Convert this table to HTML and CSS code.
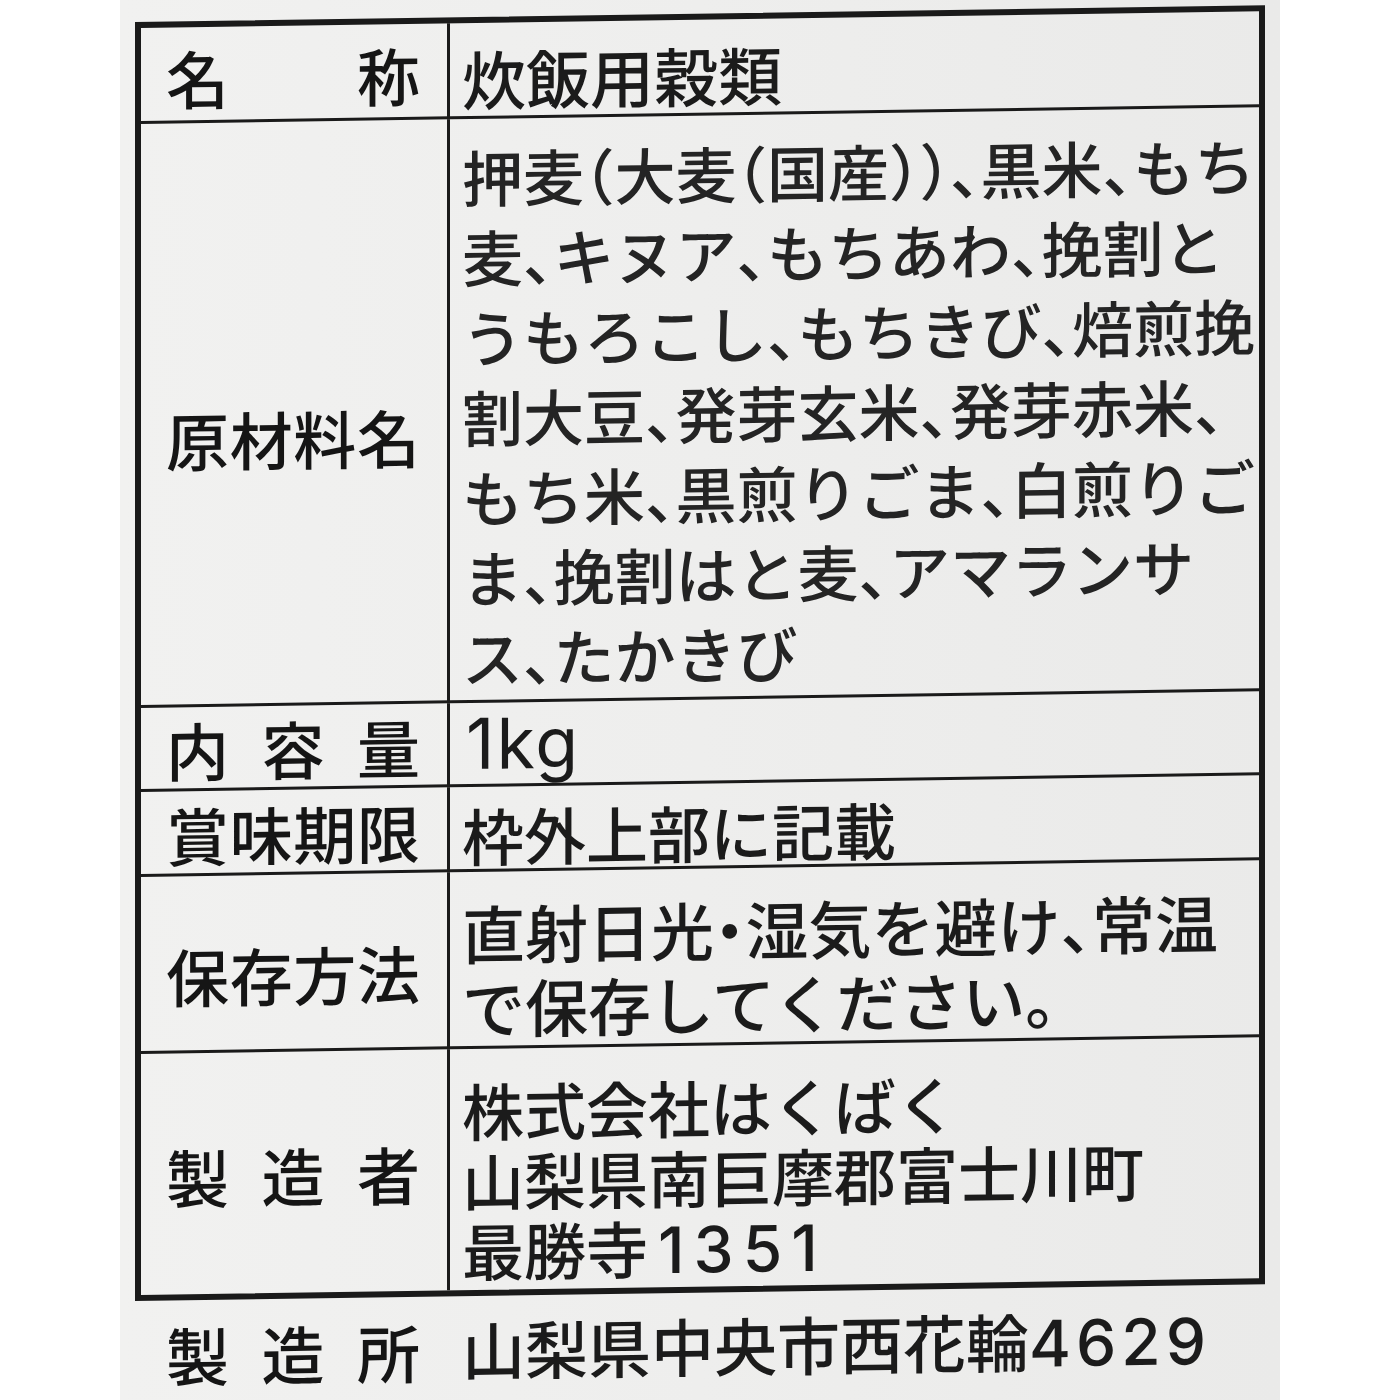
FILE: index.html
```html
<!DOCTYPE html>
<html lang="ja">
<head>
<meta charset="utf-8">
<title>炊飯用穀類 表示</title>
<link rel="stylesheet" href="styles.css">
</head>
<body>
<div class="photo">
  <div class="sheet">
    <div class="label-table">
      <div class="k k-name"><span>名称</span></div>
      <div class="v v-name">炊飯用穀類</div>

      <div class="k k-raw"><span>原材料名</span></div>
      <div class="v v-raw"><div class="lines">押麦<span class="p">（</span>大麦<span class="p">（</span>国産<span class="p">））、</span>黒米<span class="p">、</span>もち<br>麦<span class="p">、</span>キヌア<span class="p">、</span>もちあわ<span class="p">、</span>挽割と<br>うもろこし<span class="p">、</span>もちきび<span class="p">、</span>焙煎挽<br>割大豆<span class="p">、</span>発芽玄米<span class="p">、</span>発芽赤米<span class="p">、</span><br>もち米<span class="p">、</span>黒煎りごま<span class="p">、</span>白煎りご<br>ま<span class="p">、</span>挽割はと麦<span class="p">、</span>アマランサ<br>ス<span class="p">、</span>たかきび</div></div>

      <div class="k k-vol"><span>内容量</span></div>
      <div class="v v-vol"><span class="latin">1kg</span></div>

      <div class="k k-best"><span>賞味期限</span></div>
      <div class="v v-best">枠外上部に記載</div>

      <div class="k k-keep"><span>保存方法</span></div>
      <div class="v v-keep"><div class="lines">直射日光<span class="p">・</span>湿気を避け<span class="p">、</span>常温<br>で保存してください<span class="p">。</span></div></div>

      <div class="k k-maker last"><span>製造者</span></div>
      <div class="v v-maker last"><div class="lines">株式会社はくばく<br>山梨県南巨摩郡富士川町<br>最勝寺<span class="num num-a">1351</span></div></div>
    </div>

    <div class="foot">
      <div class="fk"><span>製造所</span></div>
      <div class="fv">山梨県中央市西花輪<span class="num num-b">4629</span></div>
    </div>
  </div>
</div>
</body>
</html>
```

FILE: styles.css
```css
* {
  box-sizing: border-box;
}

html,
body {
  margin: 0;
  padding: 0;
  background: #ffffff;
}

body {
  font-family: "Noto Sans CJK JP", "Noto Sans", sans-serif;
  font-weight: 500;
  color: #1b1b1b;
}

.photo {
  margin-left: 120px;
  width: 1160px;
  height: 1400px;
  padding-top: 22px;
  overflow: hidden;
  background: linear-gradient(90deg, #f1f1f0 0%, #eeeeed 50%, #eaeae9 100%);
}

.sheet {
  margin-left: 15px;
  width: 1130px;
  transform: skewY(-0.85deg);
  transform-origin: 0 0;
}

.label-table {
  border: 6px solid #1a1a1a;
  display: grid;
  grid-template-columns: 309px 1fr;
  grid-template-rows: 96px 584px 84px 85px 177px 241px;
}

.k {
  border-right: 3px solid #1a1a1a;
  border-bottom: 3px solid #1a1a1a;
  display: flex;
  align-items: center;
  padding-left: 25px;
  font-size: 63px;
  line-height: 80px;
  color: #151515;
}

.k span,
.fk span {
  display: block;
  width: 254px;
  text-align: justify;
  text-align-last: justify;
}

.v {
  border-bottom: 3px solid #1a1a1a;
  display: flex;
  align-items: center;
  padding-left: 12px;
  white-space: nowrap;
  line-height: 80px;
}

.last {
  border-bottom: none;
}

.p {
  font-feature-settings: "halt";
}

/* row: name */
.k-name { padding-top: 7px; }
.v-name { padding-top: 15px; font-size: 64px; }

/* row: raw materials */
.k-raw { padding-top: 50px; }
.v-raw { padding-top: 12px; font-size: 61px; color: #242424; }
.v-raw .lines { line-height: 80px; }

/* row: volume */
.k-vol { padding-top: 2px; }
.v-vol { padding-top: 0; padding-left: 16px; }
.latin {
  font-family: "Inter", "Liberation Sans", sans-serif;
  font-weight: 400;
  font-size: 70px;
  line-height: 80px;
  letter-spacing: 2px;
}

/* row: best before */
.k-best { padding-top: 3px; }
.v-best { padding-top: 11px; font-size: 62px; }

/* row: storage */
.k-keep { padding-top: 23px; }
.v-keep { padding-top: 20px; font-size: 63px; }
.v-keep .lines { line-height: 74px; }

/* row: maker */
.k-maker { padding-top: 4px; }
.v-maker { padding-top: 22px; font-size: 62px; }
.v-maker .lines { line-height: 70px; }

.num {
  font-family: "Inter", "Liberation Sans", sans-serif;
  font-weight: 500;
}

.num-a {
  font-size: 64px;
  letter-spacing: 9px;
  margin-left: 10px;
}

.num-b {
  font-size: 64px;
  letter-spacing: 5px;
}

/* manufacturing plant line under the table */
.foot {
  margin-top: 20px;
  display: flex;
  align-items: center;
  font-size: 63px;
  line-height: 64px;
  padding-left: 31px;
  white-space: nowrap;
}

.fk {
  width: 296px;
  color: #151515;
}
```
